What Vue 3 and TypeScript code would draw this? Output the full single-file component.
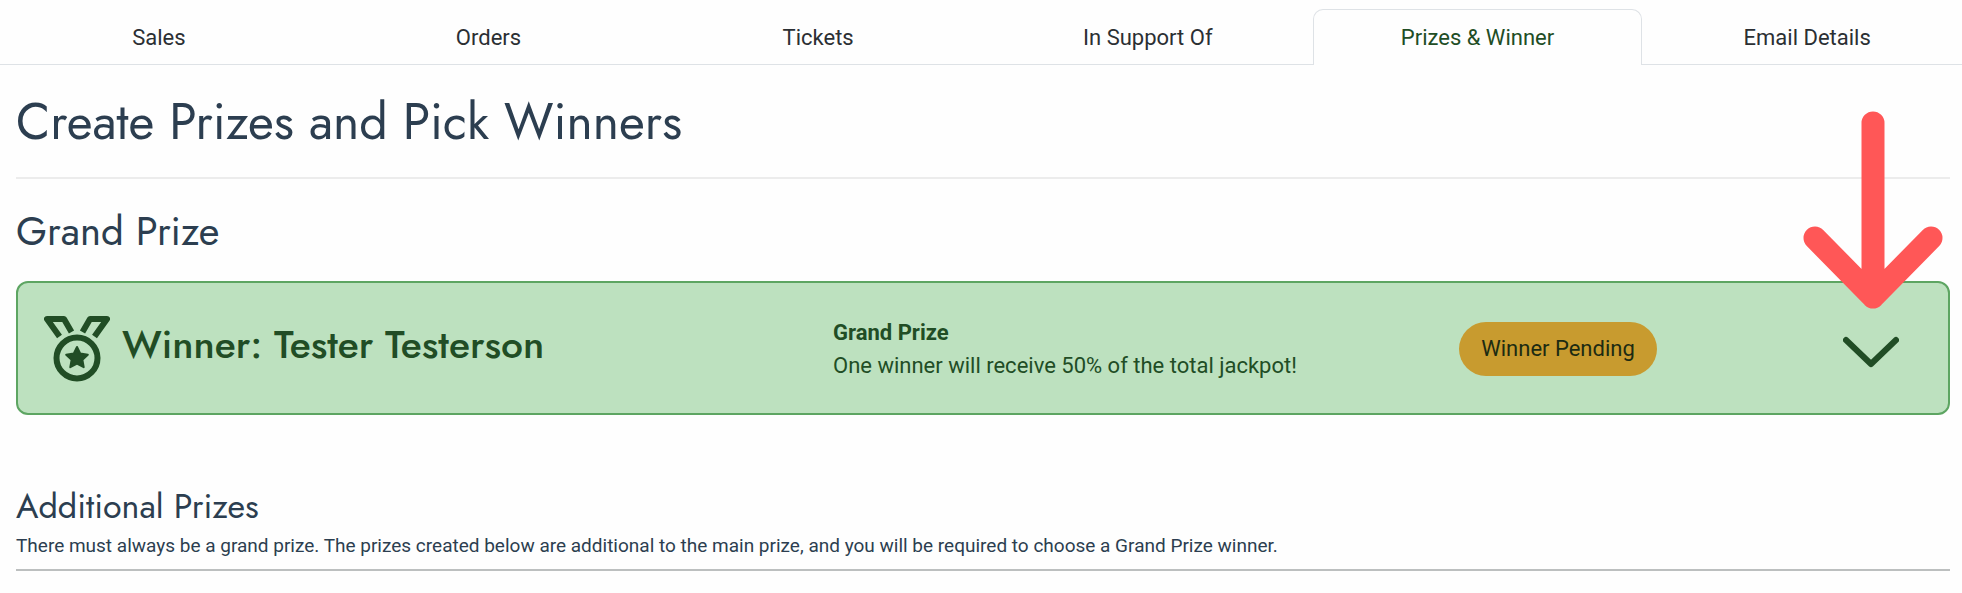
<script setup lang="ts">
import { ref } from 'vue'

const tabs: string[] = ['Sales', 'Orders', 'Tickets', 'In Support Of', 'Prizes & Winner', 'Email Details']
const activeTab = ref<string>('Prizes & Winner')
const expanded = ref<boolean>(false)
</script>

<template>
  <div class="page">
    <nav class="tab-bar" aria-label="Raffle sections">
      <div class="tabs" role="tablist">
        <button
          v-for="tab in tabs"
          :key="tab"
          type="button"
          role="tab"
          class="tab"
          :class="{ active: tab === activeTab }"
          :aria-selected="tab === activeTab"
          @click="activeTab = tab"
        >
          {{ tab }}
        </button>
      </div>
    </nav>

    <main class="content">
      <h1 class="title">Create Prizes and Pick Winners</h1>

      <section>
        <h2 class="section-title">Grand Prize</h2>
        <article class="prize-card">
          <div class="winner">
            <svg class="medal" viewBox="0 0 66 66" aria-hidden="true">
              <g fill="none" stroke="currentColor" stroke-width="6" stroke-linejoin="round">
                <path d="M15.500 20.500 L3 3 H20 L27.500 16" />
                <path d="M50.500 20.500 L63 3 H46 L38.500 16" />
                <circle cx="33" cy="42" r="20.500" />
              </g>
              <path
                d="M33 31 L36.300 37.600 L43.800 38.700 L38.400 43.900 L39.700 51.200 L33 47.700 L26.300 51.200 L27.600 43.900 L22.200 38.700 L29.700 37.600 Z"
                fill="currentColor" stroke="currentColor" stroke-width="2" stroke-linejoin="round"
              />
            </svg>
            <h3 class="winner-name">Winner: Tester Testerson</h3>
          </div>
          <div class="prize-info">
            <strong>Grand Prize</strong>
            <p>One winner will receive 50% of the total jackpot!</p>
          </div>
          <div class="status">
            <span class="badge">Winner Pending</span>
          </div>
          <button
            type="button"
            class="toggle"
            aria-label="Show prize details"
            :aria-expanded="expanded"
            @click="expanded = !expanded"
          >
            <svg viewBox="0 0 56 32" aria-hidden="true">
              <path d="M3 4 L28 28 L53 4" fill="none" stroke="currentColor" stroke-width="6" stroke-linecap="round" stroke-linejoin="round" />
            </svg>
          </button>
          <svg class="pointer" viewBox="0 0 140 198" aria-hidden="true">
            <path d="M70 12 V186 M12 127 L70 186 L128 127" fill="none" stroke="#ff5757" stroke-width="23" stroke-linecap="round" stroke-linejoin="round" />
          </svg>
        </article>
      </section>

      <section class="additional">
        <h2 class="additional-title">Additional Prizes</h2>
        <p class="note">
          There must always be a grand prize. The prizes created below are additional to the main prize, and you will be required to choose a Grand Prize winner.
        </p>
      </section>
    </main>
  </div>
</template>

<style>
body {
  margin: 0;
  background: #fefefe;
}
</style>

<style scoped>
.page {
  --heading: Jost, Futura, Lato, sans-serif;
  font-family: Roboto, sans-serif;
  color: #2c3e50;
}

h1, h2, h3, p {
  margin: 0;
  font-weight: 400;
}

.tab-bar {
  overflow: hidden;
  padding-top: 9px;
}

.tabs {
  display: grid;
  grid-template-columns: repeat(6, 1fr);
  margin: 0 -10px 0 -6px;
}

.tab {
  height: 56px;
  padding: 3px 0 0;
  border: 0 solid #dee2e6;
  border-bottom-width: 1px;
  border-radius: 0;
  background: none;
  font: 22px/30px Roboto, sans-serif;
  color: #2b2f33;
  cursor: pointer;
}

.tab.active {
  padding-top: 1px;
  border-width: 1px 1px 0;
  border-radius: 10px 10px 0 0;
  color: #214d25;
}

.content {
  padding: 0 12px 0 16px;
}

.title {
  padding: 28px 0 26px;
  border-bottom: 2px solid #ececec;
  font: 400 50px/58px var(--heading);
}

.section-title {
  padding: 28px 0 26px;
  font: 400 40px/48px var(--heading);
}

.prize-card {
  position: relative;
  display: grid;
  grid-template-columns: 789fr 568fr 314fr 184fr;
  align-items: center;
  min-height: 128px;
  padding: 2px 49px 0 26px;
  border: 2px solid #5da562;
  border-radius: 12px;
  background: #bde1bf;
  color: #214d25;
}

.winner {
  display: flex;
  align-items: center;
  gap: 12px;
}

.medal {
  width: 66px;
  height: 66px;
}

.winner-name {
  padding-bottom: 8px;
  font: 500 39px/48px var(--heading);
}

.prize-info {
  font-size: 22px;
  line-height: 33px;
}

.status {
  display: flex;
  justify-content: center;
}

.badge {
  padding: 12px 22px;
  border-radius: 27px;
  background: #c89b2f;
  color: #1c2b12;
  font-size: 22px;
  line-height: 30px;
}

.toggle {
  justify-self: end;
  width: 56px;
  padding: 6px 0 0;
  border: 0;
  background: none;
  color: inherit;
  cursor: pointer;
}

.toggle svg {
  display: block;
  width: 56px;
}

.pointer {
  position: absolute;
  top: -172px;
  right: 5px;
  width: 140px;
  pointer-events: none;
}

.additional {
  padding: 72px 0 9px;
  border-bottom: 2px solid #bcbfbf;
}

.additional-title {
  font: 400 34px/40px var(--heading);
}

.note {
  padding-top: 5px;
  font-size: 19px;
  line-height: 28px;
}
</style>
